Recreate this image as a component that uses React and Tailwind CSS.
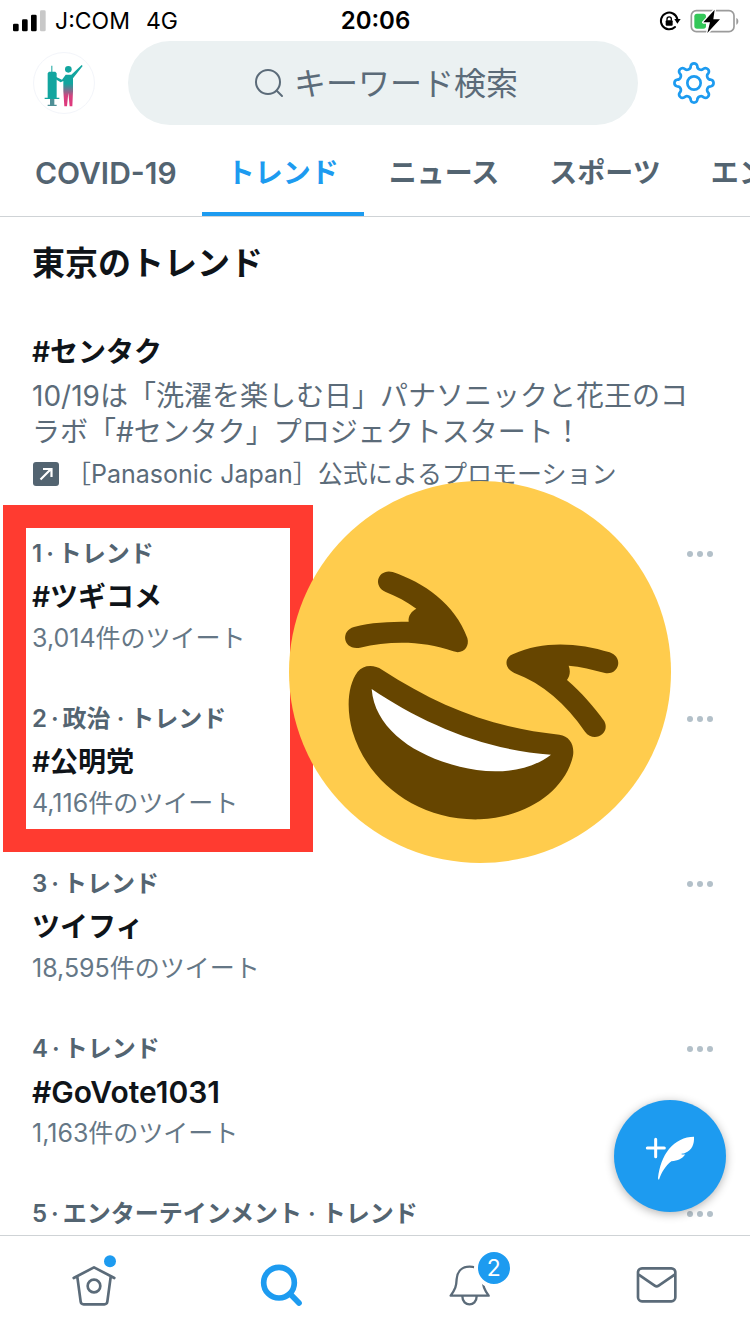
import { useState } from "react";

const TABS = ["COVID-19", "トレンド", "ニュース", "スポーツ", "エンターテインメント"];

const TRENDS = [
  { label: "トレンド", title: "#ツギコメ", count: "3,014件のツイート" },
  { label: "政治 · トレンド", title: "#公明党", count: "4,116件のツイート" },
  { label: "トレンド", title: "ツイフィ", count: "18,595件のツイート" },
  { label: "トレンド", title: "#GoVote1031", count: "1,163件のツイート" },
  { label: "エンターテインメント · トレンド" },
];

// Latin letters look smaller than kana, so all-Latin titles get a larger size
const textSize = (text) => (/^[ -~]+$/.test(text) ? "text-[30px]" : "text-[28px]");

// eight round teeth, joined by arcs that bulge out and in by turns
const gearPath = () => {
  const point = (deg) => {
    const a = (deg * Math.PI) / 180;
    return `${(52 * Math.cos(a)).toFixed(1)} ${(52 * Math.sin(a)).toFixed(1)}`;
  };
  let d = `M${point(-11)}`;
  for (let i = 0; i < 8; i++) {
    d += `A10.2 10.2 0 0 1 ${point(i * 45 + 11)}`;
    d += `A11 11 0 0 0 ${point(i * 45 + 34)}`;
  }
  return d + "Z";
};

function StatusBar() {
  return (
    <div className="grid grid-cols-3 items-center h-10 pt-0.5 pl-3 pr-[11px] text-2xl text-black">
      <div className="flex items-center text-[23px]">
        <svg width="35" height="22" viewBox="36 26 105 66" aria-hidden="true">
          <rect x="39" y="67" width="17" height="23" rx="4" />
          <rect x="66" y="54" width="17" height="36" rx="4" />
          <rect x="93" y="40" width="17" height="50" rx="4" />
          <rect x="120" y="27" width="17" height="63" rx="4" fill="#c8c8c8" />
        </svg>
        <span className="ml-2">J:COM</span>
        <span className="ml-4">4G</span>
      </div>
      <div className="text-center font-semibold">20:06</div>
      <div className="flex items-center justify-end gap-2">
        <svg width="24" height="22" viewBox="850 28 72 66" aria-hidden="true">
          <path d="M908 55A25 25 0 1 0 901 79" fill="none" stroke="#000" strokeWidth="6" strokeLinecap="round" />
          <path d="M899 55h19l-10 14z" />
          <rect x="873" y="59" width="21" height="16" rx="3" />
          <path d="M877 60v-5a6.500 6.500 0 0 1 13 0v5" fill="none" stroke="#000" strokeWidth="4" />
        </svg>
        <svg width="49" height="25" viewBox="946 22 147 75" aria-hidden="true">
          <rect x="950" y="27" width="128" height="63" rx="15" fill="none" stroke="#9b9b9b" strokeWidth="5" />
          <path d="M1085 49c8 3 8 17 0 20z" fill="#9b9b9b" />
          <rect x="959" y="36" width="35" height="45" rx="8" fill="#34c759" />
          <path d="M1020 24l-34 38h20l-8 32 38-41h-20z" fill="#000" stroke="#fff" strokeWidth="8" paintOrder="stroke" strokeLinejoin="round" />
        </svg>
      </div>
    </div>
  );
}

function Avatar() {
  return (
    <button aria-label="アカウント" className="shrink-0 rounded-full border border-[#f3f5fa]">
      <svg width="60" height="60" viewBox="0 0 180 180" aria-hidden="true">
        <defs>
          <linearGradient id="body" x1="0" y1="0" x2="0" y2="1">
            <stop offset="0.45" stopColor="#12a59f" />
            <stop offset="0.75" stopColor="#d5417f" />
            <stop offset="1" stopColor="#e0377c" />
          </linearGradient>
        </defs>
        <path d="M52 38h3v18h9l4 5v73h8v4H32v-4h9V61l4-5h7z" fill="#12a59f" />
        <path d="M48 138h13v17h7v4H41v-4h7z" fill="#4f8f96" />
        <circle cx="103" cy="49" r="10" fill="#12a59f" />
        <path d="M62 70l22 10 11-15h17l31-29 3 3-29 37v39l-2 45h-8l-4-40-4 40h-8l-3-45V84l-8 4-20-12z" fill="url(#body)" />
      </svg>
    </button>
  );
}

function Header({ tab, setTab }) {
  return (
    <header className="shrink-0 border-b border-[#cfd3d6]">
      <StatusBar />
      <div className="flex items-center justify-between pl-[33px] pr-[34px] pt-px">
        <Avatar />
        <label className="flex flex-1 items-center justify-center gap-2.5 h-[84px] ml-[33px] mr-[34px] pl-2 rounded-full bg-[#ebf1f2]">
          <svg width="30" height="30" viewBox="0 0 30 30" fill="none" stroke="#5b6b79" strokeWidth="2" strokeLinecap="round" aria-hidden="true">
            <circle cx="14" cy="14" r="12" />
            <path d="M23 23l5 5" />
          </svg>
          <input
            type="text"
            aria-label="キーワード検索"
            placeholder="キーワード検索"
            className="w-[226px] pt-0.5 bg-transparent text-[32px] leading-10 outline-none placeholder:text-[#5b6b79]"
          />
        </label>
        <button aria-label="設定" className="shrink-0">
          <svg width="44" height="44" viewBox="-66 -66 132 132" fill="none" stroke="#1d9bf0" strokeWidth="8" aria-hidden="true">
            <path d={gearPath()} strokeLinejoin="round" />
            <circle r="20" />
          </svg>
        </button>
      </div>
      <nav className="flex overflow-hidden pl-[10px]">
        {TABS.map((name) => (
          <button
            key={name}
            onClick={() => setTab(name)}
            className={
              "shrink-0 whitespace-nowrap border-b-4 px-[25px] pt-[26px] pb-[17px] leading-[44px] font-semibold " +
              textSize(name) +
              (tab === name ? " border-[#1d9bf0] text-[#1d9bf0]" : " border-transparent text-[#536471]")
            }
          >
            {name}
          </button>
        ))}
      </nav>
    </header>
  );
}

function Promoted() {
  return (
    <section className="px-8 pt-6 pb-5">
      <h3 className="text-[28px] leading-10 font-semibold">#センタク</h3>
      <p className="mt-1.5 pr-5 text-[28px] leading-9 text-[#5b6b79]">
        10/19は「洗濯を楽しむ日」パナソニックと花王のコラボ「#センタク」プロジェクトスタート！
      </p>
      <div className="mt-1 flex items-center gap-1.5 text-[25px] leading-10 text-[#5b6b79]">
        <svg width="28" height="24" viewBox="0 0 28 24" fill="none" aria-hidden="true">
          <rect x="1" width="26" height="24" rx="3" fill="#536471" />
          <path d="M8.500 17.500L19 7M11 7h8.500v8" stroke="#fff" strokeWidth="2.200" />
        </svg>
        <span className="whitespace-nowrap">［Panasonic Japan］公式によるプロモーション</span>
      </div>
    </section>
  );
}

function TrendRow({ rank, trend }) {
  return (
    <li className="flex items-start justify-between pl-8 pr-9 pt-5 pb-[23px]">
      <div>
        <div className="text-2xl leading-10 font-semibold text-[#536471]">
          {rank}
          <span className="mx-1">·</span>
          {trend.label}
        </div>
        {trend.title && (
          <h3 className={"leading-[46px] font-semibold " + textSize(trend.title)}>{trend.title}</h3>
        )}
        {trend.count && <div className="text-[25px] leading-9 text-[#657786]">{trend.count}</div>}
      </div>
      <button aria-label="もっと見る" className="flex h-10 items-center">
        <svg width="28" height="8" viewBox="0 0 28 8" fill="#b3c0c9" aria-hidden="true">
          <circle cx="4" cy="4" r="3" />
          <circle cx="14" cy="4" r="3" />
          <circle cx="24" cy="4" r="3" />
        </svg>
      </button>
    </li>
  );
}

function LaughingFace() {
  return (
    <svg className="absolute left-[289px] -top-[33px] pointer-events-none" width="382" height="382" viewBox="27 32 1146 1146" aria-hidden="true">
      <circle cx="600" cy="605" r="573" fill="#ffcc4d" />
      <g fill="#664500">
        <path d="M338 305C430 336 525 400 562 503C570 530 548 553 520 543C430 511 330 511 240 532C189 541 180 481 222 470C270 456 328 454 386 454C384 436 395 422 409 415C380 394 350 378 317 365C275 345 296 294 338 305Z" />
        <path d="M700 551C790 510 895 517 989 546C1032 561 1017 615 975 608C938 598 902 588 866 586C872 601 870 617 861 629C905 667 942 709 973 753C992 790 941 819 915 784C857 700 790 641 703 608C670 592 674 560 700 551Z" />
        <path d="M306 598C480 711 645 774 838 793C869 797 884 824 879 856C857 958 744 1041 600 1047C410 1053 260 930 217 782C199 715 202 646 233 604C250 583 282 582 306 598Z" />
      </g>
      <path d="M275 656C425 757 612 840 813 853C753 899 669 910 590 899C430 874 285 788 275 656Z" fill="#fff" />
    </svg>
  );
}

function BottomNav() {
  return (
    <nav className="grid grid-cols-4 shrink-0 h-[99px] border-t border-[#cfd3d6] bg-white">
      <a href="#home" aria-label="ホーム" className="flex items-center justify-center">
        <svg width="46" height="54" viewBox="213 70 138 162" fill="none" stroke="#5b6b79" strokeWidth="8" strokeLinecap="round" strokeLinejoin="round" className="-mt-2" aria-hidden="true">
          <path d="M221 142l61-32 61 32M232 139l10 74q1 8 9 8h62q8 0 9-8l10-74" />
          <circle cx="282" cy="166" r="19" />
          <circle cx="330" cy="92" r="18" fill="#1d9bf0" stroke="none" />
        </svg>
      </a>
      <a href="#search" aria-label="検索" className="flex items-center justify-center">
        <svg width="42" height="42" viewBox="783 102 126 126" fill="none" stroke="#1d9bf0" strokeWidth="17" strokeLinecap="round" aria-hidden="true">
          <circle cx="840" cy="158" r="46" />
          <path d="M873 191l27 28" />
        </svg>
      </a>
      <a href="#notifications" aria-label="通知" className="flex items-center justify-center">
        <span className="relative">
          <svg width="42" height="42" viewBox="220 100 126 126" fill="none" stroke="#5b6b79" strokeWidth="7" strokeLinecap="round" strokeLinejoin="round" aria-hidden="true">
            <path d="M228 195h114c-14-20-17-28-18-50c-2-24-17-37-39-37s-37 13-39 37c-1 22-4 30-18 50zM263 197c0 32 43 32 43 0" />
          </svg>
          <span className="absolute -top-4 left-[26px] flex size-10 items-center justify-center rounded-full border-4 border-white bg-[#1d9bf0] text-[23px] text-white">
            2
          </span>
        </span>
      </a>
      <a href="#messages" aria-label="メッセージ" className="flex items-center justify-center">
        <svg width="42" height="38" viewBox="781 108 126 114" fill="none" stroke="#5b6b79" strokeWidth="8" strokeLinejoin="round" aria-hidden="true">
          <rect x="790" y="115" width="112" height="99" rx="12" />
          <path d="M792 134l48 33q6 4 12 0l48-33" />
        </svg>
      </a>
    </nav>
  );
}

export default function App() {
  const [tab, setTab] = useState("トレンド");

  return (
    <div className="flex h-screen flex-col overflow-hidden bg-white text-[#0f1419] font-['Inter','Noto_Sans_CJK_JP',sans-serif]">
      <Header tab={tab} setTab={setTab} />
      <main className="relative flex-1 min-h-0 overflow-hidden">
        <h2 className="px-8 pt-[21px] pb-5 text-[33px] leading-[50px] font-bold">東京のトレンド</h2>
        <Promoted />
        <ol className="relative">
          {TRENDS.map((trend, i) => (
            <TrendRow key={i} rank={i + 1} trend={trend} />
          ))}
          <div className="absolute left-[3px] -top-[9px] h-[347px] w-[310px] border-[23px] border-[#ff3b30] pointer-events-none" />
          <LaughingFace />
        </ol>
        <button
          aria-label="ツイートする"
          className="absolute right-6 bottom-[23px] size-28 rounded-full bg-[#1d9bf0] shadow-[0_2px_10px_rgba(0,0,0,0.3)]"
        >
          <svg width="112" height="112" viewBox="72 60 336 336" fill="#fff" aria-hidden="true">
            <path d="M197 178v52M172 204h51" stroke="#fff" strokeWidth="9" strokeLinecap="round" />
            <path d="M312 170c1 22-5 39-27 49c-5 2-8 2-12 3c5 2 9 2 13 1c-9 14-22 19-42 21c-18 14-29 33-37 55q-3 0-3-5c4-34 15-65 33-87c20-24 46-37 75-37z" />
          </svg>
        </button>
      </main>
      <BottomNav />
    </div>
  );
}
